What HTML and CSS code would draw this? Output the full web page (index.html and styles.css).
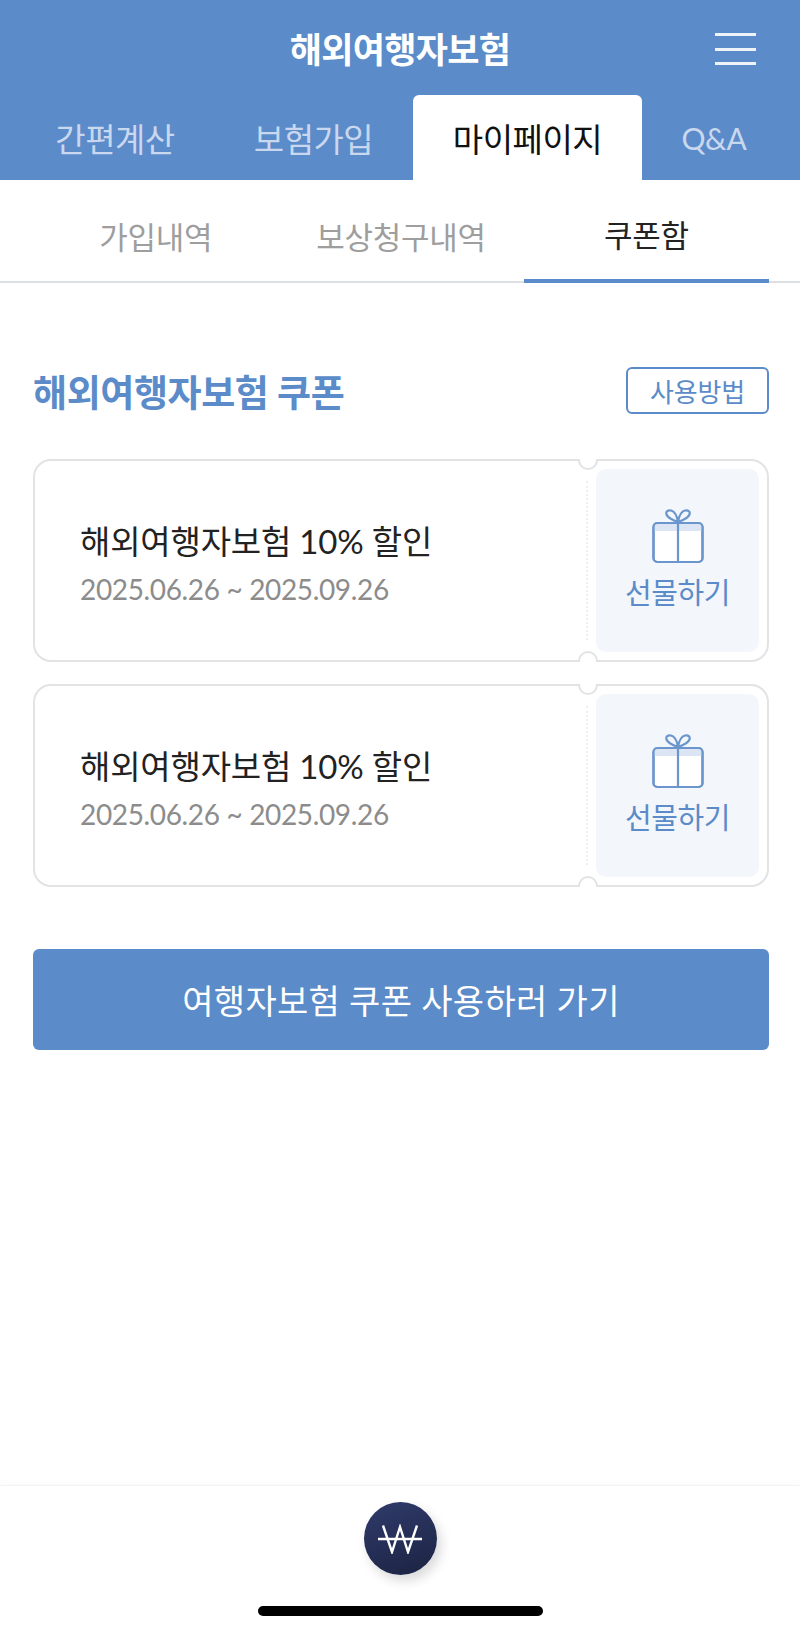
FILE: index.html
```html
<!DOCTYPE html>
<html lang="ko">
<head>
<meta charset="utf-8">
<title>해외여행자보험</title>
<link rel="stylesheet" href="styles.css">
</head>
<body>
<div class="page">
  <header class="header">
    <div class="title-row">
      <h1 class="title">해외여행자보험</h1>
      <div class="menu"><span></span><span></span><span></span></div>
    </div>
    <nav class="main-tabs">
      <div class="main-tab t1">간편계산</div>
      <div class="main-tab t2">보험가입</div>
      <div class="main-tab t3 active">마이페이지</div>
      <div class="main-tab t4">Q&amp;A</div>
    </nav>
  </header>
  <nav class="sub-tabs">
    <div class="sub-tab">가입내역</div>
    <div class="sub-tab">보상청구내역</div>
    <div class="sub-tab active">쿠폰함</div>
  </nav>
  <main class="content">
    <div class="section-head">
      <h2 class="section-title">해외여행자보험 쿠폰</h2>
      <div class="how-btn">사용방법</div>
    </div>
    <div class="coupons">
      <div class="coupon">
        <div class="notch top"></div>
        <div class="notch bottom"></div>
        <div class="coupon-info">
          <div class="coupon-name">해외여행자보험 10% 할인</div>
          <div class="coupon-date">2025.06.26 ~ 2025.09.26</div>
        </div>
        <div class="gift">
          <svg class="gift-icon" width="52" height="55" viewBox="0 0 52 55" fill="none" stroke="#6b96cd" stroke-width="2.200">
            <rect x="1.500" y="14" width="49" height="39" rx="4" fill="#fff"/>
            <path d="M2 15.500a3 3 0 0 1 3-2.500h42a3 3 0 0 1 3 2.500V22H2z" fill="#dbe5f3" stroke="none"/>
            <rect x="1.500" y="14" width="49" height="39" rx="4"/>
            <path d="M26 13v40"/>
            <path d="M26 13c-3-1-10-3.500-11.500-7.500C13.500 2.500 16 .8 19 1.500c3.500.8 6 5.500 7 11.500 1-6 3.500-10.700 7-11.500 3-.7 5.500 1 4.500 4C36 9.500 29 12 26 13z"/>
          </svg>
          <span class="gift-label">선물하기</span>
        </div>
      </div>
      <div class="coupon">
        <div class="notch top"></div>
        <div class="notch bottom"></div>
        <div class="coupon-info">
          <div class="coupon-name">해외여행자보험 10% 할인</div>
          <div class="coupon-date">2025.06.26 ~ 2025.09.26</div>
        </div>
        <div class="gift">
          <svg class="gift-icon" width="52" height="55" viewBox="0 0 52 55" fill="none" stroke="#6b96cd" stroke-width="2.200">
            <rect x="1.500" y="14" width="49" height="39" rx="4" fill="#fff"/>
            <path d="M2 15.500a3 3 0 0 1 3-2.500h42a3 3 0 0 1 3 2.500V22H2z" fill="#dbe5f3" stroke="none"/>
            <rect x="1.500" y="14" width="49" height="39" rx="4"/>
            <path d="M26 13v40"/>
            <path d="M26 13c-3-1-10-3.500-11.500-7.500C13.500 2.500 16 .8 19 1.500c3.500.8 6 5.500 7 11.500 1-6 3.500-10.700 7-11.500 3-.7 5.500 1 4.500 4C36 9.500 29 12 26 13z"/>
          </svg>
          <span class="gift-label">선물하기</span>
        </div>
      </div>
    </div>
    <div class="cta">여행자보험 쿠폰 사용하러 가기</div>
  </main>
  <footer class="footer">
    <div class="won">
      <svg width="44" height="30" viewBox="0 0 44 30" fill="none" stroke="#fff" stroke-width="2.400">
        <path d="M5 1.500 14 28 22 3 30 28 39 1.500"/>
        <path d="M0 15h44"/>
      </svg>
    </div>
    <div class="home-bar"></div>
  </footer>
</div>
</body>
</html>
```
FILE: styles.css
```css
* { box-sizing: border-box; margin: 0; padding: 0; }
html, body { background: #fff; }
body { font-family: Lato, "Noto Sans CJK KR", sans-serif; }
.page { width: 800px; height: 1632px; display: flex; flex-direction: column; }

.header { background: #5b8bc9; height: 180px; display: flex; flex-direction: column; }
.title-row { height: 95px; padding: 33px 44px 0 0; display: flex; justify-content: flex-end; position: relative; }
.title { position: absolute; left: 0; right: 0; top: 19px; text-align: center; color: #fff; font-size: 35px; font-weight: 700; line-height: 60px; letter-spacing: -.7px; }
.menu { width: 41px; height: 32px; display: flex; flex-direction: column; justify-content: space-between; }
.menu span { display: block; height: 3px; background: #eef2f9; }
.main-tabs { flex: 1; display: flex; padding-left: 16px; }
.main-tab { height: 85px; display: flex; align-items: center; justify-content: center; font-size: 33px; letter-spacing: -.5px; color: #c9d8ee; font-weight: 400; }
.t1 { width: 198px; }
.t2 { width: 199px; }
.t3 { width: 229px; }
.t4 { width: 144px; font-size: 30px; }
.main-tab.active { background: #fff; color: #111; border-radius: 6px 6px 0 0; }

.sub-tabs { height: 103px; display: flex; padding: 0 31px 0 33px; border-bottom: 2px solid #dcdfe3; }
.sub-tab { flex: 1; height: 103px; display: flex; align-items: center; justify-content: center; padding-top: 8px; font-size: 31px; letter-spacing: -.3px; color: #9e9e9e; font-weight: 400; }
.sub-tab.active { color: #222; border-bottom: 4px solid #5b8bc9; }

.content { flex: 1; padding: 0 31px 0 33px; }
.section-head { height: 47px; margin-top: 84px; display: flex; align-items: center; justify-content: space-between; }
.section-title { font-size: 37px; font-weight: 700; color: #5b8bc9; letter-spacing: -.4px; }
.how-btn { width: 143px; height: 47px; border: 2px solid #5b8bc9; border-radius: 6px; display: flex; align-items: center; justify-content: center; color: #5b8bc9; font-size: 26px; letter-spacing: -.2px; }

.coupons { margin-top: 45px; display: flex; flex-direction: column; gap: 22px; }
.coupon { position: relative; height: 203px; border: 2px solid #e2e3e5; border-radius: 18px; display: flex; justify-content: space-between; padding: 8px; background: #fff; }
.notch { position: absolute; left: 543px; width: 20px; height: 20px; background: #fff; border: 2px solid #e2e3e5; border-radius: 50%; }
.notch.top { top: -11px; clip-path: inset(9px 0 0 0); }
.notch.bottom { bottom: -11px; clip-path: inset(0 0 9px 0); }
.coupon-info { flex: 1; padding: 47px 0 0 37px; }
.coupon-name { font-size: 33px; line-height: 50px; color: #222; letter-spacing: -.2px; }
.coupon-date { font-size: 28px; line-height: 40px; color: #8c8c8c; margin-top: 3px; letter-spacing: -.35px; }
.gift { width: 163px; height: 183px; background: #f3f6fb; border-radius: 10px; display: flex; flex-direction: column; align-items: center; padding-top: 40px; position: relative; }
.gift::before { content: ""; position: absolute; left: -10px; top: 12px; bottom: 12px; border-left: 2px dotted #eceef0; }
.gift-label { font-size: 29px; line-height: 40px; color: #5b8bc9; letter-spacing: -.4px; margin-top: 9px; }

.cta { margin-top: 62px; height: 101px; background: #5b8bc9; border-radius: 6px; display: flex; align-items: center; justify-content: center; color: #fff; font-size: 34px; font-weight: 400; letter-spacing: .3px; }

.footer { height: 147px; border-top: 1px solid #f4f4f6; box-shadow: 0 -3px 6px rgba(0,0,0,.02); display: flex; flex-direction: column; align-items: center; }
.won { width: 73px; height: 73px; margin-top: 16px; border-radius: 50%; background: linear-gradient(160deg, #2f3b6b, #1c2342); box-shadow: 4px 6px 12px rgba(0,0,0,.15); display: flex; align-items: center; justify-content: center; }
.home-bar { width: 285px; height: 10px; border-radius: 5px; background: #000; margin-top: 31px; }
```
